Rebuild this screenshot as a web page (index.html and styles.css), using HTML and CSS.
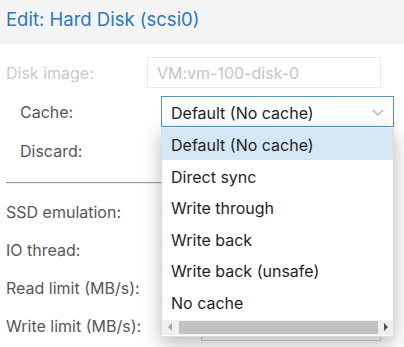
FILE: index.html
```html
<!DOCTYPE html>
<html lang="en">
<head>
  <meta charset="UTF-8" />
  <title>Edit: Hard Disk (scsi0)</title>
  <link rel="stylesheet" href="styles.css">
</head>
<body>
  <div class="dialog">
    <header class="dialog-title">Edit: Hard Disk (scsi0)</header>

    <div class="form">
      <div class="row">
        <label class="disabled">Disk image:</label>
        <div class="field text-field disabled-field">VM:vm-100-disk-0</div>
      </div>

      <div class="row indent">
        <label>Cache:</label>
        <div class="combo">
          <div class="field select-field">
            <span>Default (No cache)</span>
            <svg class="chevron" width="12" height="7" viewBox="0 0 12 7">
              <path d="M1 1 L6 6 L11 1" fill="none" stroke="#b0b0b0" stroke-width="1.3"/>
            </svg>
          </div>
          <!-- open picker list -->
          <ul class="picker">
            <li class="selected">Default (No cache)</li>
            <li>Direct sync</li>
            <li>Write through</li>
            <li>Write back</li>
            <li>Write back (unsafe)</li>
            <li>No cache</li>
            <li class="hscroll">
              <span class="arrow left"></span>
              <span class="thumb"></span>
              <span class="arrow right"></span>
            </li>
          </ul>
        </div>
      </div>

      <div class="row indent">
        <label>Discard:</label>
      </div>

      <hr class="separator">

      <div class="row tight">
        <label>SSD emulation:</label>
      </div>
      <div class="row tight">
        <label>IO thread:</label>
      </div>
      <div class="row tight">
        <label>Read limit (MB/s):</label>
        <div class="field limit-field"></div>
      </div>
      <div class="row tight">
        <label>Write limit (MB/s):</label>
        <div class="field limit-field"></div>
      </div>
    </div>
  </div>
</body>
</html>
```

FILE: styles.css
```css
* {
  box-sizing: border-box;
}

body, html {
  margin: 0;
  padding: 0;
  font-family: 'Inter', 'Open Sans', sans-serif;
  background: #fff;
  overflow: hidden;
}

.dialog {
  width: 404px;
  height: 347px;
}

.dialog-title {
  height: 44px;
  background-color: #f4f4f4;
  color: #2f77b9;
  font-size: 18.5px;
  line-height: 39px;
  padding-left: 6px;
}

.form {
  padding-top: 13px;
}

.row {
  display: flex;
  align-items: center;
  height: 31px;
  margin-bottom: 8px;
  padding-left: 6px;
  font-size: 16px;
  color: #575757;
}

.row.indent {
  padding-left: 20px;
}

.row.tight {
  margin-bottom: 7px;
}

.row label {
  width: 141px;
  flex: none;
}

.row.tight label {
  width: 195px;
}

label.disabled {
  color: #c9c9c9;
}

.field {
  height: 31px;
  border: 1px solid #ececec;
  display: flex;
  align-items: center;
  padding-left: 9px;
  padding-top: 1px;
}

.text-field {
  width: 234px;
}

.disabled-field {
  color: #c4c4c4;
}

.limit-field {
  width: 180px;
  border-color: #d2d2d2;
}

.combo {
  position: relative;
}

.select-field {
  width: 233px;
  border-color: #5a8fc4;
  color: #222;
  justify-content: space-between;
  padding-right: 9px;
  padding-top: 2px;
}

.chevron {
  margin-top: -1px;
}

.separator {
  margin: 16px 0 12px 6px;
  width: 155px;
  border: none;
  border-top: 1px solid #9a9a9a;
  border-bottom: 1px solid #eeeeee;
  height: 2px;
}

.picker {
  position: absolute;
  top: 32px;
  left: 0;
  width: 233px;
  margin: 0;
  padding: 0 0 1px;
  list-style: none;
  background: #fff;
  border: 1px solid #dcdcdc;
  border-top: none;
  box-shadow: 0 6px 18px rgba(0, 0, 0, 0.28);
  z-index: 5;
  color: #1f1f1f;
}

.picker li {
  height: 31.6px;
  line-height: 28.6px;
  padding-top: 3px;
  padding-left: 9px;
  white-space: nowrap;
}

.picker li.selected {
  background-color: #d5e6f5;
}

.picker li.hscroll {
  height: 15px;
  margin-top: 2px;
  padding: 0;
  background: #f0f0f0;
  display: flex;
  align-items: center;
}

.hscroll .thumb {
  flex: none;
  width: 199px;
  height: 13px;
  margin-left: 2px;
  background: #c2c2c2;
}

.hscroll .arrow {
  flex: none;
  width: 15px;
  height: 15px;
  display: flex;
  align-items: center;
  justify-content: center;
}

.hscroll .arrow::before {
  content: "";
  border-top: 4px solid transparent;
  border-bottom: 4px solid transparent;
}

.hscroll .left::before {
  border-right: 4px solid #a3a3a3;
}

.hscroll .right::before {
  border-left: 4px solid #505050;
}
```
